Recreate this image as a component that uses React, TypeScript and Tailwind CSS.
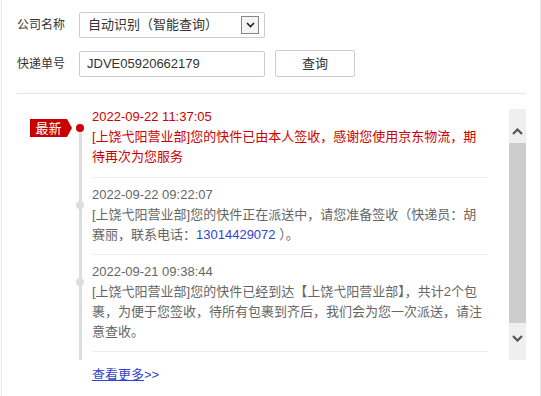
import React from 'react';

type TrackItem = {
  time: string;
  lines: React.ReactNode;
  latest?: boolean;
};

const items: TrackItem[] = [
  {
    time: '2022-09-22 11:37:05',
    lines: '[上饶弋阳营业部]您的快件已由本人签收，感谢您使用京东物流，期待再次为您服务',
    latest: true,
  },
  {
    time: '2022-09-22 09:22:07',
    lines: (
      <>
        [上饶弋阳营业部]您的快件正在派送中，请您准备签收（快递员：胡赛丽，联系电话：
        <span className="text-[#3344cc]">13014429072</span> ）。
      </>
    ),
  },
  {
    time: '2022-09-21 09:38:44',
    lines: '[上饶弋阳营业部]您的快件已经到达【上饶弋阳营业部】，共计2个包裹，为便于您签收，待所有包裹到齐后，我们会为您一次派送，请注意查收。',
  },
];

const Chevron = ({ up }: { up?: boolean }) => (
  <svg width="11" height="7" viewBox="0 0 11 7">
    <polyline
      points={up ? '1,6 5.5,1.5 10,6' : '1,1 5.5,5.5 10,1'}
      fill="none"
      stroke="#555"
      strokeWidth="2.2"
    />
  </svg>
);

export default function App() {
  return (
    <div className="ml-px h-[396px] w-[540px] border-x border-[#e6e6e6] bg-white font-['Liberation_Sans','Noto_Sans_CJK_SC',sans-serif]">
      <div className="pl-[15px] pr-[14px] pt-3">
        {/* query form */}
        <div className="flex h-[26px] items-center">
          <span className="w-[62px] text-[12px] text-[#333]">公司名称</span>
          <div className="flex h-[26px] w-[186px] items-center justify-between rounded-[2px] border border-[#ccc] pl-[8px] pr-[5px]">
            <span className="text-[13px] text-[#333]">自动识别（智能查询）</span>
            <div className="flex h-[18px] w-[18px] items-center justify-center border border-[#888] bg-[#f4f4f4]">
              <svg width="9" height="6" viewBox="0 0 9 6">
                <polyline points="1,1 4.5,4.5 8,1" fill="none" stroke="#222" strokeWidth="1.6" />
              </svg>
            </div>
          </div>
        </div>
        <div className="mt-3 flex h-[27px] items-center">
          <span className="w-[62px] text-[12px] text-[#333]">快递单号</span>
          <div className="flex h-[26px] w-[186px] items-center rounded-[2px] border border-[#ccc] pl-[7px]">
            <span className="text-[13px] text-[#333]">JDVE05920662179</span>
          </div>
          <button className="ml-[10px] h-[27px] w-[80px] rounded-[2px] border border-[#ccc] bg-white text-[13px] text-[#333]">
            查询
          </button>
        </div>

        <div className="mt-4 border-t border-[#e6e6e6]" />

        {/* timeline */}
        <div className="mt-[13px] flex">
          <div className="relative w-[491px] pb-[8px]">
            <div className="absolute bottom-0 left-[62px] top-[21px] w-[3px] bg-[#ddd]" />
            {items.map((item, i) => (
              <div key={item.time} className="flex">
                <div className="relative w-[75px] shrink-0">
                  {item.latest && (
                    <div className="absolute left-[13px] top-[12px] flex h-[18px] items-center">
                      <div className="flex h-[18px] w-[37px] items-center justify-center bg-[#c80000] text-[13px] leading-none text-white">
                        最新
                      </div>
                      <div className="h-0 w-0 border-y-[9px] border-l-[5px] border-y-transparent border-l-[#c80000]" />
                    </div>
                  )}
                  <div
                    className={
                      item.latest
                        ? 'absolute left-[59px] top-[17px] h-[8px] w-[8px] rounded-full bg-[#d00000]'
                        : 'absolute left-[59px] top-[23px] h-[8px] w-[8px] rounded-full bg-[#ddd]'
                    }
                  />
                </div>
                <div
                  className={
                    'w-[396px] border-b border-[#eee] text-[13px] leading-[20px] ' +
                    (i === 0 ? 'pb-[10px] text-[#cc0000]' : 'pb-[9px] pt-[7px] text-[#666]')
                  }
                >
                  <div>{item.time}</div>
                  <div>{item.lines}</div>
                </div>
              </div>
            ))}
          </div>

          {/* scrollbar */}
          <div className="ml-[2px] mt-[2px] flex h-[251px] w-[17px] flex-col bg-[#efefef]">
            <div className="flex h-[34px] items-center justify-center pt-[10px]">
              <Chevron up />
            </div>
            <div className="h-[180px] bg-[#cdcdcd]" />
            <div className="flex flex-1 items-center justify-center pb-[7px]">
              <Chevron />
            </div>
          </div>
        </div>

        <div className="mt-[5px] pl-[75px] text-[13px] leading-[20px] text-[#3344cc]">
          <span className="underline">查看更多</span>&gt;&gt;
        </div>
      </div>
    </div>
  );
}
